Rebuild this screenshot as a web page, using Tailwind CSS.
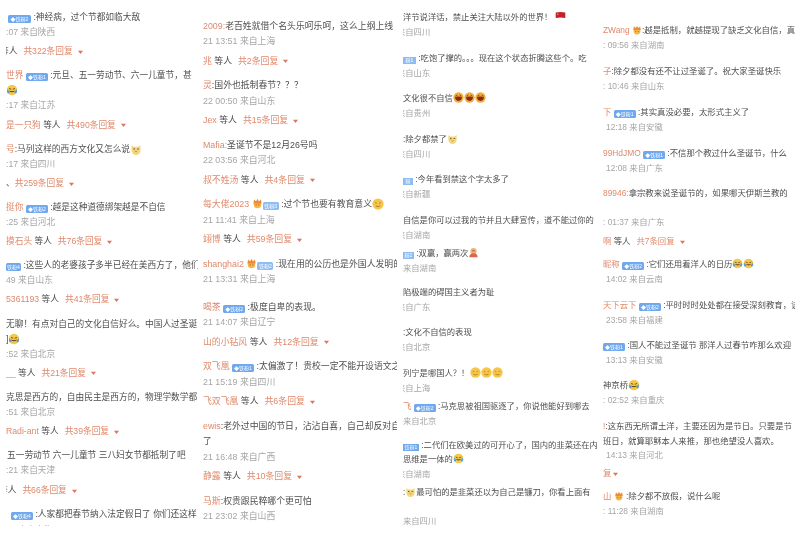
<!DOCTYPE html>
<html lang="zh-CN">
<head>
<meta charset="UTF-8">
<title>评论</title>
<script src="https://cdn.jsdelivr.net/npm/@tailwindcss/browser@4"></script>
</head>
<body class="bg-white">

<!-- emoji shared by all columns -->
<svg class="hidden">
  <symbol id="cry" viewBox="0 0 16 16"><circle cx="8" cy="8" r="7" fill="#f3c84b"/><path d="M3.5 8.5q4.5 5 9 0q-4.5 1.5-9 0z" fill="#6b4a1e"/><path d="M2 7q-2 3 0 5q2 1 3-1z" fill="#4f9ee8"/><path d="M14 7q2 3 0 5q-2 1-3-1z" fill="#4f9ee8"/><path d="M4 6l3 1M12 6l-3 1" stroke="#6b4a1e" stroke-width="1.2"/></symbol>
  <symbol id="cat" viewBox="0 0 16 16"><path d="M2 3l3 2h6l3-2v7a6 6 0 0 1-12 0z" fill="#f3d77f"/><circle cx="5.5" cy="8" r="1" fill="#6b4a1e"/><path d="M9.500 8h2.500" stroke="#6b4a1e" stroke-width="1.1"/><path d="M6.5 11q1.5 1.5 3 0" stroke="#c9693f" stroke-width="1" fill="none"/></symbol>
  <symbol id="grin" viewBox="0 0 16 16"><circle cx="8" cy="8" r="7.5" fill="#f0ae3c"/><path d="M3 7q5-1 10 0q0 6-5 6t-5-6z" fill="#8a2a1c"/><path d="M4 5.5l2.5-1M12 5.5l-2.5-1" stroke="#6b3a12" stroke-width="1.1"/></symbol>
  <symbol id="smile" viewBox="0 0 16 16"><circle cx="8" cy="8" r="7.5" fill="#f6c64a"/><path d="M4 7q1.2-1.5 2.4 0M9.6 7q1.2-1.5 2.4 0M5 10.5q3 2 6 0" stroke="#9a6a1e" stroke-width="1" fill="none"/></symbol>
  <symbol id="crown" viewBox="0 0 16 16"><circle cx="8" cy="9.5" r="5.5" fill="#f5b64a"/><path d="M2 8l1-6 3 3 2-4 2 4 3-3 1 6z" fill="#ec8a3a"/><circle cx="6" cy="10" r=".8" fill="#b5521e"/><circle cx="10" cy="10" r=".8" fill="#b5521e"/></symbol>
  <symbol id="bow" viewBox="0 0 16 16"><circle cx="8" cy="6" r="4.5" fill="#eeb27a"/><path d="M2 15q0-6 6-6t6 6z" fill="#d9684a"/><path d="M6 5.5h4" stroke="#8a3a20" stroke-width="1"/></symbol>
  <symbol id="flag" viewBox="0 0 16 16"><path d="M1 3.500q7-1.500 14 0v8q-7-1.500-14 0z" fill="#c4202a"/><circle cx="4" cy="6" r="1" fill="#f5c84a"/></symbol>
  <symbol id="caret" viewBox="0 0 8 6"><path d="M0 1h8L4 6z" fill="#e0745a"/></symbol>
</svg>

<main class="grid grid-cols-[200px_200px_200px_200px] w-[800px] h-[533px] overflow-hidden blur-[0.3px] whitespace-nowrap text-[#4e4e4e] font-['Liberation_Sans','Noto_Sans_CJK_SC',sans-serif]">

  <!-- column 1 -->
  <section class="h-[526px] overflow-hidden ml-[6px] mr-[2px] pt-[10px] leading-[15.1px] text-[8.7px]">
    <div>
      <div class="pl-[2px]"><span class="inline-block align-[-1px] w-[23px] h-[8px] leading-[8px] rounded-[1.5px] bg-[#6fa8ee] text-white text-[5px] text-center">◆铁粉2</span> :神经病，过个节都如临大敌</div>
      <div class="text-[#a6a6a6]">:07 来自陕西</div>
      <div class="mt-[4px] -ml-[6px]">等人<span class="ml-[6px] text-[#e0896c]">共322条回复</span><svg class="inline-block w-[5px] h-[4px] ml-[5px]"><use href="#caret"/></svg></div>
    </div>
    <div class="mt-[9px]">
      <div><span class="text-[#e0896c]">世界</span> <span class="inline-block align-[-1px] w-[22px] h-[8px] leading-[8px] rounded-[1.5px] bg-[#6fa8ee] text-white text-[5px] text-center">◆铁粉1</span> :元旦、五一劳动节、六一儿童节，甚</div>
      <div><svg class="inline-block w-[12px] h-[12px] align-[-3px]"><use href="#cry"/></svg></div>
      <div class="text-[#a6a6a6]">:17 来自江苏</div>
      <div class="mt-[4px]"><span class="text-[#e0896c]">是一只狗</span> 等人<span class="ml-[6px] text-[#e0896c]">共490条回复</span><svg class="inline-block w-[5px] h-[4px] ml-[5px]"><use href="#caret"/></svg></div>
    </div>
    <div class="mt-[9px]">
      <div><span class="text-[#e0896c]">号</span>:马列这样的西方文化又怎么说<svg class="inline-block w-[12px] h-[12px] align-[-3px]"><use href="#cat"/></svg></div>
      <div class="text-[#a6a6a6]">:17 来自四川</div>
      <div class="mt-[4px]">、<span class="text-[#e0896c]">共259条回复</span><svg class="inline-block w-[5px] h-[4px] ml-[5px]"><use href="#caret"/></svg></div>
    </div>
    <div class="mt-[9px]">
      <div><span class="text-[#e0896c]">挺你</span> <span class="inline-block align-[-1px] w-[22px] h-[8px] leading-[8px] rounded-[1.5px] bg-[#6fa8ee] text-white text-[5px] text-center">◆铁粉2</span> :越是这种道德绑架越是不自信</div>
      <div class="text-[#a6a6a6]">:25 来自河北</div>
      <div class="mt-[4px]"><span class="text-[#e0896c]">摸石头</span> 等人<span class="ml-[6px] text-[#e0896c]">共76条回复</span><svg class="inline-block w-[5px] h-[4px] ml-[5px]"><use href="#caret"/></svg></div>
    </div>
    <div class="mt-[9px]">
      <div><span class="inline-block align-[-1px] w-[15px] h-[8px] leading-[8px] rounded-[1.5px] bg-[#6fa8ee] text-white text-[5px] text-center">铁粉4</span> :这些人的老婆孩子多半已经在美西方了，他们</div>
      <div class="text-[#a6a6a6]">49 来自山东</div>
      <div class="mt-[4px]"><span class="text-[#e0896c]">5361193</span> 等人<span class="ml-[6px] text-[#e0896c]">共41条回复</span><svg class="inline-block w-[5px] h-[4px] ml-[5px]"><use href="#caret"/></svg></div>
    </div>
    <div class="mt-[9px]">
      <div>无聊！有点对自己的文化自信好么。中国人过圣诞</div>
      <div>]<svg class="inline-block w-[12px] h-[12px] align-[-3px]"><use href="#cry"/></svg></div>
      <div class="text-[#a6a6a6]">:52 来自北京</div>
      <div class="mt-[4px]"><span class="text-[#e0896c]">__</span> 等人<span class="ml-[6px] text-[#e0896c]">共21条回复</span><svg class="inline-block w-[5px] h-[4px] ml-[5px]"><use href="#caret"/></svg></div>
    </div>
    <div class="mt-[9px]">
      <div>克思是西方的，自由民主是西方的，物理学数学都</div>
      <div class="text-[#a6a6a6]">:51 来自北京</div>
      <div class="mt-[4px]"><span class="text-[#e0896c]">Radi-ant</span> 等人<span class="ml-[6px] text-[#e0896c]">共39条回复</span><svg class="inline-block w-[5px] h-[4px] ml-[5px]"><use href="#caret"/></svg></div>
    </div>
    <div class="mt-[9px]">
      <div class="pl-[1px]">五一劳动节 六一儿童节 三八妇女节都抵制了吧</div>
      <div class="text-[#a6a6a6]">:21 来自天津</div>
      <div class="mt-[5px] -ml-[7px]">等人<span class="ml-[6px] text-[#e0896c]">共66条回复</span><svg class="inline-block w-[5px] h-[4px] ml-[5px]"><use href="#caret"/></svg></div>
    </div>
    <div class="mt-[9px]">
      <div class="pl-[5px]"><span class="inline-block align-[-1px] w-[22px] h-[8px] leading-[8px] rounded-[1.5px] bg-[#6fa8ee] text-white text-[5px] text-center">◆铁粉4</span> :人家都把春节纳入法定假日了 你们还这样</div>
      <div class="text-[#a6a6a6]">14 来自上海</div>
    </div>
  </section>

  <!-- column 2 -->
  <section class="overflow-hidden ml-[3px] mr-[3px] pt-[18.5px] leading-[15.5px] text-[8.85px]">
    <div>
      <div><span class="text-[#e0896c]">2009:</span>老百姓就借个名头乐呵乐呵，这么上纲上线</div>
      <div class="text-[#a6a6a6]">21 13:51 来自上海</div>
      <div class="mt-[4px]"><span class="text-[#e0896c]">兆</span> 等人<span class="ml-[6px] text-[#e0896c]">共2条回复</span><svg class="inline-block w-[5px] h-[4px] ml-[5px]"><use href="#caret"/></svg></div>
    </div>
    <div class="mt-[9px]">
      <div><span class="text-[#e0896c]">灵</span>:国外也抵制春节？？？</div>
      <div class="text-[#a6a6a6]">22 00:50 来自山东</div>
      <div class="mt-[4px]"><span class="text-[#e0896c]">Jex</span> 等人<span class="ml-[6px] text-[#e0896c]">共15条回复</span><svg class="inline-block w-[5px] h-[4px] ml-[5px]"><use href="#caret"/></svg></div>
    </div>
    <div class="mt-[9px]">
      <div><span class="text-[#e0896c]">Mafia:</span>圣诞节不是12月26号吗</div>
      <div class="text-[#a6a6a6]">22 03:56 来自河北</div>
      <div class="mt-[4px]"><span class="text-[#e0896c]">叔不姓汤</span> 等人<span class="ml-[6px] text-[#e0896c]">共4条回复</span><svg class="inline-block w-[5px] h-[4px] ml-[5px]"><use href="#caret"/></svg></div>
    </div>
    <div class="mt-[9px]">
      <div><span class="text-[#e0896c]">每大佬2023</span> <svg class="inline-block w-[11px] h-[11px] align-[-2px]"><use href="#crown"/></svg><span class="inline-block align-[-1px] w-[16px] h-[8px] leading-[8px] rounded-[1.5px] bg-[#8dbcf3] text-white text-[5px] text-center">铁粉3</span> :过个节也要有教育意义<svg class="inline-block w-[12px] h-[12px] align-[-3px]"><use href="#smile"/></svg></div>
      <div class="text-[#a6a6a6]">21 11:41 来自上海</div>
      <div class="mt-[4px]"><span class="text-[#e0896c]">翊博</span> 等人<span class="ml-[6px] text-[#e0896c]">共59条回复</span><svg class="inline-block w-[5px] h-[4px] ml-[5px]"><use href="#caret"/></svg></div>
    </div>
    <div class="mt-[9px]">
      <div><span class="text-[#e0896c]">shanghai2</span> <svg class="inline-block w-[11px] h-[11px] align-[-2px]"><use href="#crown"/></svg><span class="inline-block align-[-1px] w-[16px] h-[8px] leading-[8px] rounded-[1.5px] bg-[#8dbcf3] text-white text-[5px] text-center">铁粉2</span> :现在用的公历也是外国人发明的</div>
      <div class="text-[#a6a6a6]">21 13:31 来自上海</div>
    </div>
    <div class="mt-[12px]">
      <div><span class="text-[#e0896c]">喝茶</span> <span class="inline-block align-[-1px] w-[22px] h-[8px] leading-[8px] rounded-[1.5px] bg-[#6fa8ee] text-white text-[5px] text-center">◆铁粉2</span> :极度自卑的表现。</div>
      <div class="text-[#a6a6a6]">21 14:07 来自辽宁</div>
      <div class="mt-[4px]"><span class="text-[#e0896c]">山的小钻风</span> 等人<span class="ml-[6px] text-[#e0896c]">共12条回复</span><svg class="inline-block w-[5px] h-[4px] ml-[5px]"><use href="#caret"/></svg></div>
    </div>
    <div class="mt-[9px]">
      <div><span class="text-[#e0896c]">双飞凰</span> <span class="inline-block align-[-1px] w-[22px] h-[8px] leading-[8px] rounded-[1.5px] bg-[#6fa8ee] text-white text-[5px] text-center">◆铁粉1</span> :太偏激了！贵校一定不能开设语文之</div>
      <div class="text-[#a6a6a6]">21 15:19 来自四川</div>
      <div class="mt-[4px]"><span class="text-[#e0896c]">飞双飞凰</span> 等人<span class="ml-[6px] text-[#e0896c]">共6条回复</span><svg class="inline-block w-[5px] h-[4px] ml-[5px]"><use href="#caret"/></svg></div>
    </div>
    <div class="mt-[9px]">
      <div><span class="text-[#e0896c]">ewis</span>:老外过中国的节日，沾沾自喜，自己却反对自</div>
      <div>了</div>
      <div class="text-[#a6a6a6]">21 16:48 来自广西</div>
      <div class="mt-[4px]"><span class="text-[#e0896c]">静露</span> 等人<span class="ml-[6px] text-[#e0896c]">共10条回复</span><svg class="inline-block w-[5px] h-[4px] ml-[5px]"><use href="#caret"/></svg></div>
    </div>
    <div class="mt-[9px]">
      <div><span class="text-[#e0896c]">马斯</span>:权贵跟民粹哪个更可怕</div>
      <div class="text-[#a6a6a6]">21 23:02 来自山西</div>
    </div>
  </section>

  <!-- column 3 -->
  <section class="overflow-hidden ml-[3px] mr-[3px] pt-[10px] leading-[15px] text-[8.3px]">
    <div>
      <div>洋节说洋话，禁止关注大陆以外的世界！<svg class="inline-block w-[11px] h-[11px] align-[-1px] ml-[3px]"><use href="#flag"/></svg></div>
      <div class="-ml-[6px] text-[#a6a6a6]">来自四川</div>
    </div>
    <div class="mt-[11px]">
      <div><span class="inline-block align-[-1px] w-[13px] h-[7px] leading-[7px] bg-[#8dbcf3] text-white text-[5px] text-center">粉1</span> :吃饱了撑的。。。现在这个状态折腾这些个。吃</div>
      <div class="-ml-[6px] text-[#a6a6a6]">来自山东</div>
    </div>
    <div class="mt-[10px]">
      <div>文化很不自信<svg class="inline-block w-[11px] h-[11px] align-[-2px]"><use href="#grin"/></svg><svg class="inline-block w-[11px] h-[11px] align-[-2px]"><use href="#grin"/></svg><svg class="inline-block w-[11px] h-[11px] align-[-2px]"><use href="#grin"/></svg></div>
      <div class="-ml-[6px] text-[#a6a6a6]">来自贵州</div>
    </div>
    <div class="mt-[11px]">
      <div>:除夕都禁了<svg class="inline-block w-[11px] h-[11px] align-[-2px]"><use href="#cat"/></svg></div>
      <div class="-ml-[6px] text-[#a6a6a6]">来自四川</div>
    </div>
    <div class="mt-[10px]">
      <div><span class="inline-block align-[-1px] w-[10px] h-[7px] leading-[7px] bg-[#8dbcf3] text-white text-[5px] text-center">粉</span> :今年看到禁这个字太多了</div>
      <div class="-ml-[6px] text-[#a6a6a6]">来自新疆</div>
    </div>
    <div class="mt-[11px]">
      <div>自信是你可以过我的节并且大肆宣传，道不能过你的</div>
      <div class="-ml-[6px] text-[#a6a6a6]">来自湖南</div>
    </div>
    <div class="mt-[3px]">
      <div><span class="inline-block align-[-1px] w-[11px] h-[7px] leading-[7px] bg-[#8dbcf3] text-white text-[5px] text-center">粉2</span> :双赢，赢两次<svg class="inline-block w-[11px] h-[11px] align-[-2px]"><use href="#bow"/></svg></div>
      <div class="text-[#a6a6a6]">来自湖南</div>
    </div>
    <div class="mt-[9px]">
      <div>陷极端的碍国主义者为耻</div>
      <div class="-ml-[6px] text-[#a6a6a6]">来自广东</div>
    </div>
    <div class="mt-[10px]">
      <div>:文化不自信的表现</div>
      <div class="-ml-[6px] text-[#a6a6a6]">来自北京</div>
    </div>
    <div class="mt-[11px]">
      <div>列宁是哪国人？！<svg class="inline-block w-[11px] h-[11px] align-[-2px] ml-[1px]"><use href="#smile"/></svg><svg class="inline-block w-[11px] h-[11px] align-[-2px]"><use href="#smile"/></svg><svg class="inline-block w-[11px] h-[11px] align-[-2px]"><use href="#smile"/></svg></div>
      <div class="-ml-[6px] text-[#a6a6a6]">来自上海</div>
    </div>
    <div class="mt-[3px]">
      <div><span class="text-[#e0896c]">飞</span> <span class="inline-block align-[-1px] w-[22px] h-[8px] leading-[8px] rounded-[1.5px] bg-[#6fa8ee] text-white text-[5px] text-center">◆铁粉2</span> :马克思被祖国驱逐了，你说他能好到哪去</div>
      <div class="text-[#a6a6a6]">来自北京</div>
    </div>
    <div class="mt-[9px]">
      <div><span class="inline-block align-[-1px] w-[16px] h-[7px] leading-[7px] bg-[#6fa8ee] text-white text-[5px] text-center">铁粉1</span> :二代们在欧美过的可开心了，国内的韭菜还在内</div>
      <div class="-mt-[1px]">思维是一体的<svg class="inline-block w-[11px] h-[11px] align-[-2px]"><use href="#cry"/></svg></div>
      <div class="-ml-[6px] text-[#a6a6a6]">来自湖南</div>
    </div>
    <div class="mt-[3px]">
      <div>:<svg class="inline-block w-[11px] h-[11px] align-[-2px]"><use href="#cat"/></svg>最可怕的是韭菜还以为自己是镰刀，你看上面有</div>
      <div class="mt-[14px] text-[#a6a6a6]">来自四川</div>
    </div>
  </section>

  <!-- column 4 -->
  <section class="overflow-hidden ml-[3px] mr-[5px] pt-[23px] leading-[15px] text-[8.4px]">
    <div>
      <div><span class="text-[#e0896c]">ZWang</span> <svg class="inline-block w-[10px] h-[10px] align-[-2px]"><use href="#crown"/></svg>:越是抵制，就越提现了缺乏文化自信，真</div>
      <div class="text-[#a6a6a6]">: 09:56 来自湖南</div>
    </div>
    <div class="mt-[11px]">
      <div><span class="text-[#e0896c]">子</span>:除夕都没有还不让过圣诞了。祝大家圣诞快乐</div>
      <div class="text-[#a6a6a6]">: 10:46 来自山东</div>
    </div>
    <div class="mt-[11px]">
      <div><span class="text-[#e0896c]">下</span> <span class="inline-block align-[-1px] w-[22px] h-[8px] leading-[8px] rounded-[1.5px] bg-[#6fa8ee] text-white text-[5px] text-center">◆铁粉1</span> :其实真没必要，太形式主义了</div>
      <div class="pl-[3px] text-[#a6a6a6]">12:18 来自安徽</div>
    </div>
    <div class="mt-[11px]">
      <div><span class="text-[#e0896c]">99HdJMO</span> <span class="inline-block align-[-1px] w-[22px] h-[8px] leading-[8px] rounded-[1.5px] bg-[#6fa8ee] text-white text-[5px] text-center">◆铁粉1</span> :不信那个教过什么圣诞节，什么</div>
      <div class="pl-[3px] text-[#a6a6a6]">12:08 来自广东</div>
    </div>
    <div class="mt-[10px]">
      <div><span class="text-[#e0896c]">89946:</span>拿宗教来说圣诞节的，如果哪天伊斯兰教的</div>
      <div class="mt-[14px] text-[#a6a6a6]">: 01:37 来自广东</div>
      <div class="mt-[4px]"><span class="text-[#e0896c]">啊</span> 等人<span class="ml-[6px] text-[#e0896c]">共7条回复</span><svg class="inline-block w-[5px] h-[4px] ml-[5px]"><use href="#caret"/></svg></div>
    </div>
    <div class="mt-[8px]">
      <div><span class="text-[#e0896c]">昵称</span> <span class="inline-block align-[-1px] w-[22px] h-[8px] leading-[8px] rounded-[1.5px] bg-[#6fa8ee] text-white text-[5px] text-center">◆铁粉2</span> :它们还用着洋人的日历<svg class="inline-block w-[11px] h-[11px] align-[-2px]"><use href="#cry"/></svg><svg class="inline-block w-[11px] h-[11px] align-[-2px]"><use href="#cry"/></svg></div>
      <div class="pl-[3px] text-[#a6a6a6]">14:02 来自云南</div>
    </div>
    <div class="mt-[11px]">
      <div><span class="text-[#e0896c]">天下云下</span> <span class="inline-block align-[-1px] w-[22px] h-[8px] leading-[8px] rounded-[1.5px] bg-[#6fa8ee] text-white text-[5px] text-center">◆铁粉2</span> :平时时时处处都在接受深刻教育，该</div>
      <div class="pl-[3px] text-[#a6a6a6]">23:58 来自福建</div>
    </div>
    <div class="mt-[10px]">
      <div><span class="inline-block align-[-1px] w-[22px] h-[8px] leading-[8px] rounded-[1.5px] bg-[#6fa8ee] text-white text-[5px] text-center">◆铁粉1</span> :国人不能过圣诞节 那洋人过春节咋那么欢迎</div>
      <div class="pl-[3px] text-[#a6a6a6]">13:13 来自安徽</div>
    </div>
    <div class="mt-[10px]">
      <div>神京桥<svg class="inline-block w-[12px] h-[12px] align-[-3px]"><use href="#cry"/></svg></div>
      <div class="text-[#a6a6a6]">: 02:52 来自重庆</div>
    </div>
    <div class="mt-[11px]">
      <div><span class="text-[#e0896c]">!</span>:这东西无所谓土洋，主要还因为是节日。只要是节</div>
      <div>班日，就算耶稣本人来推，那也绝望没人喜欢。</div>
      <div class="pl-[3px] text-[#a6a6a6] -mt-[1px]">14:13 来自河北</div>
      <div class="mt-[3px] text-[#e0896c]">复<svg class="inline-block w-[5px] h-[4px] ml-[2px]"><use href="#caret"/></svg></div>
    </div>
    <div class="mt-[8px]">
      <div><span class="text-[#e0896c]">山</span> <svg class="inline-block w-[10px] h-[10px] align-[-2px]"><use href="#crown"/></svg> :除夕都不放假，说什么呢</div>
      <div class="text-[#a6a6a6]">: 11:28 来自湖南</div>
    </div>
  </section>

</main>
</body>
</html>
